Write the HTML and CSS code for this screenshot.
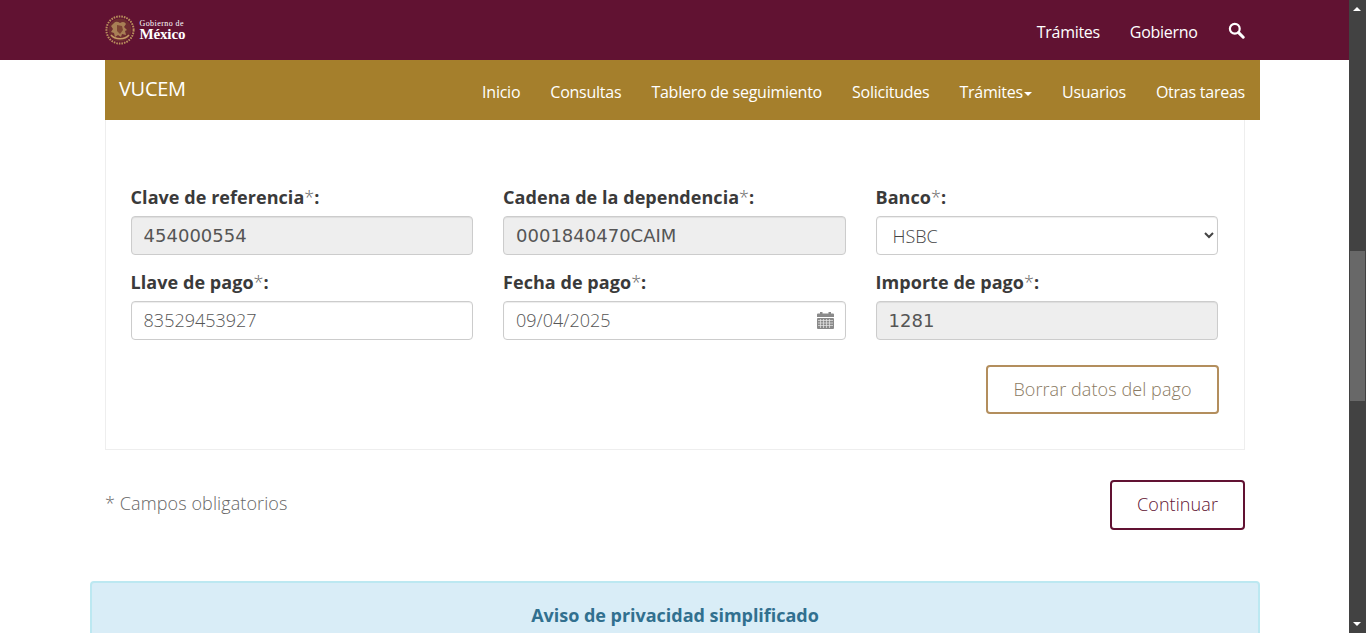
FILE: index.html
```html
<!DOCTYPE html>
<html lang="es">
<head>
<meta charset="utf-8">
<title>VUCEM</title>
<link rel="stylesheet" href="styles.css">
</head>
<body>
<div class="viewport">
  <div class="page">
    <header class="topbar">
      <div class="topbar-inner">
        <a class="logo" href="#">
          <svg class="emblem" width="30" height="30" viewBox="0 0 30 30" aria-hidden="true">
            <circle cx="15" cy="15" r="13.6" fill="none" stroke="#b98f5c" stroke-width="2" stroke-dasharray="1.6 1"/>
            <circle cx="15" cy="15" r="11.6" fill="#6e2c30"/>
            <path d="M9 8c2-2 4-1 6 0 3-2 5-1 6 1l-2 3 3 3-2 1 1 4-4-1-1 3-3-2-3 2-1-4-3-1 2-3-2-3z" fill="#a87f55"/>
            <path d="M12 10l5 1 1 4-3 4-3-3z" fill="#7d4433"/>
            <path d="M6 20c4 5 14 5 18 0" fill="none" stroke="#c49a66" stroke-width="1.5"/>
          </svg>
          <span class="logo-text"><span class="logo-small">Gobierno de</span><span class="logo-big">México</span></span>
        </a>
        <nav class="topnav">
          <a href="#">Trámites</a>
          <a href="#">Gobierno</a>
          <a href="#" class="search" aria-label="Buscar">
            <svg width="17" height="17" viewBox="0 0 17 17"><circle cx="6.8" cy="6.8" r="4.9" fill="none" stroke="#fff" stroke-width="2.2"/><path d="M10.6 10.6l4.6 4.6" stroke="#fff" stroke-width="3" stroke-linecap="round"/></svg>
          </a>
        </nav>
      </div>
    </header>

    <div class="subnav">
      <span class="brand">VUCEM</span>
      <nav class="subnav-links">
        <a href="#">Inicio</a>
        <a href="#">Consultas</a>
        <a href="#">Tablero de seguimiento</a>
        <a href="#">Solicitudes</a>
        <a href="#">Trámites<span class="caret"></span></a>
        <a href="#">Usuarios</a>
        <a href="#">Otras tareas</a>
      </nav>
    </div>

    <main class="content">
      <section class="panel">
        <form class="grid">
          <div class="field">
            <label>Clave de referencia<span class="req">*</span>:</label>
            <input class="control locked" value="454000554" readonly>
          </div>
          <div class="field">
            <label>Cadena de la dependencia<span class="req">*</span>:</label>
            <input class="control locked" value="0001840470CAIM" readonly>
          </div>
          <div class="field">
            <label>Banco<span class="req">*</span>:</label>
            <select class="control select"><option>HSBC</option></select>
          </div>
          <div class="field">
            <label>Llave de pago<span class="req">*</span>:</label>
            <input class="control entry" value="83529453927">
          </div>
          <div class="field">
            <label>Fecha de pago<span class="req">*</span>:</label>
            <div class="date-wrap">
              <input class="control entry" value="09/04/2025">
              <svg class="calendar" width="17" height="18" viewBox="0 0 17 18" aria-hidden="true">
                <path d="M0 3.5a1 1 0 0 1 1-1h2V1h2.500v1.500h6V1H14v1.500h2a1 1 0 0 1 1 1V6H0z" fill="#8a8a8a"/>
                <rect x="0" y="7" width="17" height="11" rx="1" fill="#8a8a8a"/>
                <path d="M1 9.500h15M1 12h15M1 14.500h15M3.500 8v9M6.500 8v9M9.500 8v9M12.500 8v9" stroke="#fff" stroke-width=".7" opacity=".8"/>
              </svg>
            </div>
          </div>
          <div class="field">
            <label>Importe de pago<span class="req">*</span>:</label>
            <input class="control locked" value="1281" readonly>
          </div>
        </form>
        <div class="panel-actions">
          <button type="button" class="btn btn-gold">Borrar datos del pago</button>
        </div>
      </section>

      <div class="footer-row">
        <span class="note">* Campos obligatorios</span>
        <button type="button" class="btn btn-wine">Continuar</button>
      </div>
    </main>

    <aside class="notice">
      <h2>Aviso de privacidad simplificado</h2>
    </aside>
  </div>

  <div class="scrollbar" aria-hidden="true">
    <span class="arrow up"></span>
    <span class="thumb"></span>
    <span class="arrow down"></span>
  </div>
</div>
</body>
</html>
```

FILE: styles.css
```css
* { box-sizing: border-box; }
html, body { margin: 0; height: 100%; overflow: hidden; background: #fff; }
body { font-family: "Open Sans", "Noto Sans", sans-serif; color: #333; font-size: 18px; }
a { text-decoration: none; color: inherit; }

.viewport { display: flex; height: 633px; width: 1366px; overflow: hidden; }
.page { width: 1349px; flex: none; overflow: hidden; }

.topbar { height: 60px; background: #611232; }
.topbar-inner { width: 1170px; margin: 0 auto; padding: 0 15px; height: 60px; display: flex; justify-content: space-between; align-items: center; }
.logo { display: flex; align-items: center; gap: 5px; color: #fff; }
.emblem { display: block; margin-top: -1px; }
.logo-text { display: flex; flex-direction: column; font-family: "Liberation Serif", serif; line-height: 1; margin-top: 0; }
.logo-small { font-size: 8px; line-height: 8px; letter-spacing: .42px; }
.logo-big { font-size: 15px; font-weight: 700; line-height: 12px; letter-spacing: -.15px; }
.topnav { display: flex; align-items: center; gap: 30px; font-size: 16px; font-weight: 400; color: #fff; letter-spacing: -.3px; padding-top: 3px; }
.search { display: flex; margin: -2px 0 0 0; }

.subnav { width: 1155px; height: 60px; margin-left: 105px; background: #a57f2c; color: #fff; display: flex; justify-content: space-between; padding: 0 15px 0 14px; }
.brand { font-size: 20px; font-weight: 400; line-height: 58px; letter-spacing: -.3px; }
.subnav-links { display: flex; gap: 30px; font-size: 16px; letter-spacing: -.24px; line-height: 65px; }
.caret { display: inline-block; width: 0; height: 0; margin-left: 1px; vertical-align: middle; border-top: 4px solid #fff; border-left: 4px solid transparent; border-right: 4px solid transparent; }

.content { width: 1140px; margin-left: 105px; }
.panel { height: 330px; border: 1px solid #eee; border-top: 0; padding: 66px 26px 0 24.6px; }
.grid { display: grid; grid-template-columns: repeat(3, 1fr); column-gap: 30px; row-gap: 16px; }
.field label { display: block; font-size: 18px; font-weight: 700; line-height: 23px; color: #3a3a3a; margin-bottom: 7px; letter-spacing: .05px; }
.req { font-weight: 300; color: #666; }
.control { display: block; width: 100%; height: 39px; border: 1px solid #ccc; border-radius: 4px; background: #fff; padding: 0 12px; font-family: "Open Sans", sans-serif; font-size: 18px; color: #555; box-shadow: inset 0 1px 1px rgba(0,0,0,.075); font-weight: 300; outline: 0; }
.entry { padding-bottom: 2px; }
.locked { background: #eee; font-family: "DejaVu Sans", sans-serif; font-weight: 400; font-size: 18px; color: #555; }
.select { color: #444; }
.date-wrap { position: relative; }
.calendar { position: absolute; right: 12px; top: 10px; }
.panel-actions { display: flex; justify-content: flex-end; margin: 25px -1px 0 0; }

.btn { background: #fff; font-family: "Open Sans", sans-serif; font-size: 18px; font-weight: 300; border-radius: 4px; height: 49px; border-style: solid; border-width: 2px; letter-spacing: .08px; padding: 0 0 2px; }
.btn-gold { width: 233px; border-color: #b38e5d; color: #8a7a62; }
.btn-wine { width: 135px; height: 50px; border-color: #611232; color: #611232; }

.footer-row { display: flex; justify-content: space-between; align-items: center; margin-top: 30px; }
.note { font-size: 18px; font-weight: 300; color: #666; letter-spacing: .1px; margin-top: -5px; }

.notice { width: 1170px; margin: 51px 0 0 90px; height: 120px; background: #d9edf7; border: 2px solid #bce8f1; border-radius: 4px; padding-top: 20px; }
.notice h2 { margin: 0; text-align: center; font-size: 18px; font-weight: 700; color: #31708f; line-height: 24px; letter-spacing: -.03px; }

.scrollbar { width: 17px; flex: none; background: #424242; position: relative; }
.thumb { position: absolute; left: 1px; width: 15px; top: 251px; height: 150px; background: #686868; }
.arrow { position: absolute; left: 4px; width: 0; height: 0; border-left: 4px solid transparent; border-right: 4px solid transparent; }
.arrow.up { top: 7px; border-bottom: 4px solid #fff; }
.arrow.down { bottom: 7px; border-top: 4px solid #fff; }
```
